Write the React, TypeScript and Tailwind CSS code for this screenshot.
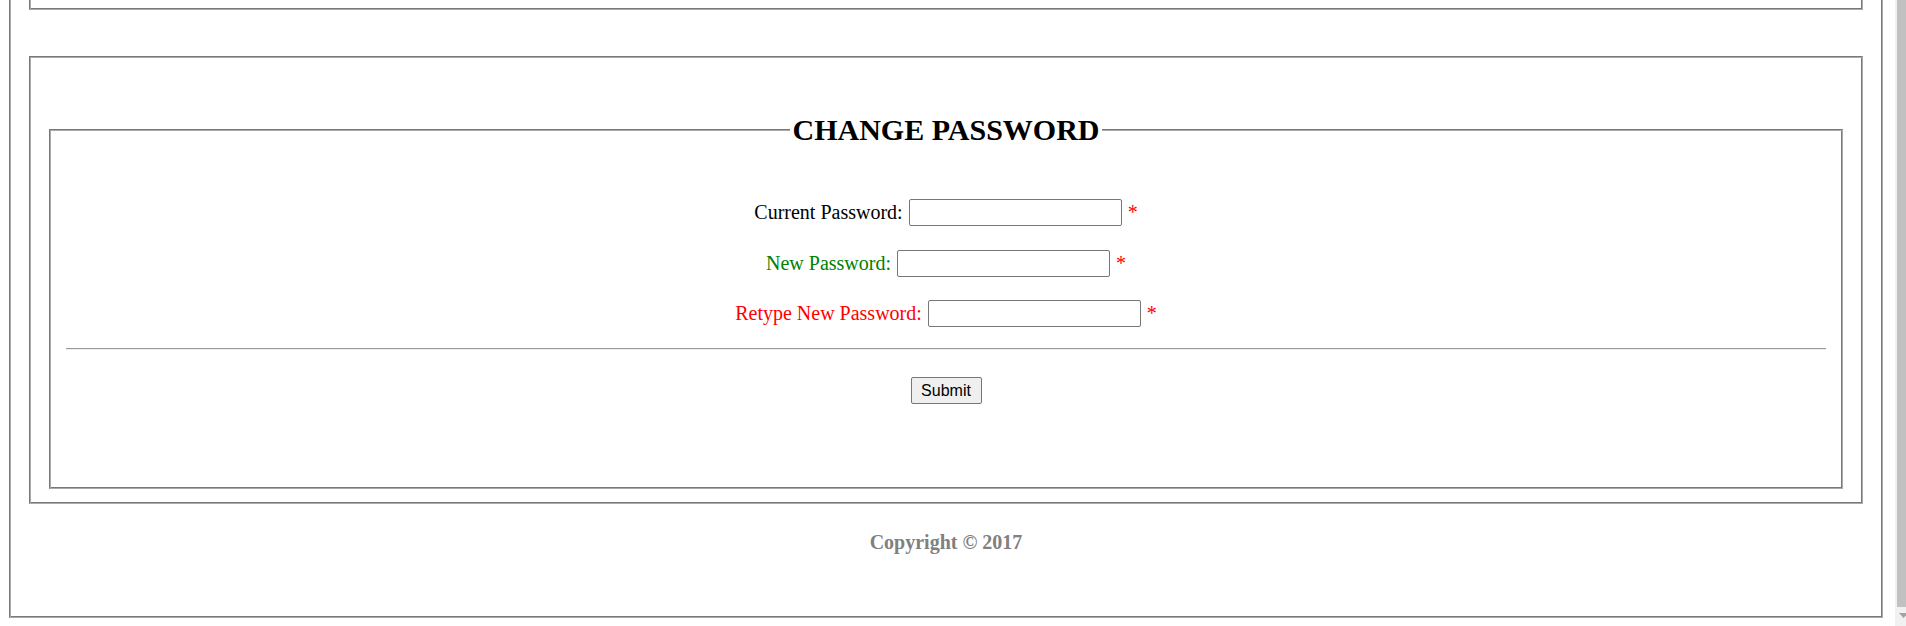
import React from 'react';

// groove-like 2px borders: outer line + inner line via inset shadow
const grooveOpenTop =
  'border-l border-r border-b border-l-[#787878] border-r-[#aaaaaa] border-b-[#aaaaaa] shadow-[inset_1px_0_0_#aaaaaa,inset_-1px_-1px_0_#787878]';
const grooveFull =
  'border border-t-[#787878] border-l-[#787878] border-r-[#aaaaaa] border-b-[#aaaaaa] shadow-[inset_1px_1px_0_#aaaaaa,inset_-1px_-1px_0_#787878]';

const fields = [
  { label: 'Current Password:', color: 'text-black' },
  { label: 'New Password:', color: 'text-[#008000]' },
  { label: 'Retype New Password:', color: 'text-[#ff0000]' },
];

const Row: React.FC<{ label: string; color: string; className?: string }> = ({ label, color, className }) => (
  <div className={`flex h-[27px] items-center justify-center ${className ?? ''}`}>
    <label className={`${color} text-[20px] leading-[23px]`}>{label}</label>
    <input
      type="password"
      className="ml-[6px] h-[27px] w-[213px] rounded-[2px] border border-[#767676] bg-white px-[2px] outline-none"
    />
    <span className="ml-[6px] text-[20px] leading-[23px] text-[#ff0000]">*</span>
  </div>
);

const App: React.FC = () => {
  return (
    <div className="flex h-[626px] w-[1906px] overflow-hidden bg-white font-['Liberation_Serif','Times_New_Roman',serif] text-black">
      <div className="flex-1 pl-[9px] pr-[12px]">
        <div className={`flex flex-col px-[19px] pb-[63px] ${grooveOpenTop}`}>
          {/* tail of the box above (page is scrolled) */}
          <div className={`h-[10px] ${grooveOpenTop}`}></div>

          <div className={`mt-[46px] px-[19px] pt-[57px] pb-[14px] ${grooveFull}`}>
            {/* fieldset */}
            <div className="flex h-[30px]">
              <div className="h-[15px] flex-1 self-end border-t border-l border-t-[#787878] border-l-[#787878] shadow-[inset_1px_1px_0_#aaaaaa]"></div>
              <h2 className="h-[30px] px-[2.5px] text-[30px] font-bold leading-[32px]">CHANGE PASSWORD</h2>
              <div className="h-[15px] flex-1 self-end border-t border-r border-t-[#787878] border-r-[#aaaaaa] shadow-[inset_0_1px_0_#aaaaaa,inset_-1px_0_0_#787878]"></div>
            </div>
            <div className={`px-[16px] pt-[55px] pb-[84px] ${grooveOpenTop}`}>
              <Row {...fields[0]} />
              <Row {...fields[1]} className="mt-[24px]" />
              <Row {...fields[2]} className="mt-[23px]" />
              <hr className="mt-[21px] border-t border-b border-t-[#9a9a9a] border-b-[#eeeeee]" />
              <div className="mt-[27px] flex justify-center">
                <button className="h-[27px] w-[71px] rounded-[2px] border border-[#767676] bg-[#efefef] font-['Liberation_Sans',Arial,sans-serif] text-[16px] leading-[20px] text-black">
                  Submit
                </button>
              </div>
            </div>
          </div>

          <p className="mt-[27px] text-center text-[20px] font-bold leading-[23px] text-[#808080]">
            Copyright © 2017
          </p>
        </div>
      </div>

      {/* browser scrollbar, cut at the right edge */}
      <div className="flex w-[11px] flex-col bg-[#f1f1f1]">
        <div className="ml-[2px] h-[607px] bg-[#c1c1c1]"></div>
        <svg width="11" height="19" viewBox="0 0 11 19">
          <polygon points="4,6 13,6 8.5,11" fill="#a3a3a3" />
        </svg>
      </div>
    </div>
  );
};

export default App;
